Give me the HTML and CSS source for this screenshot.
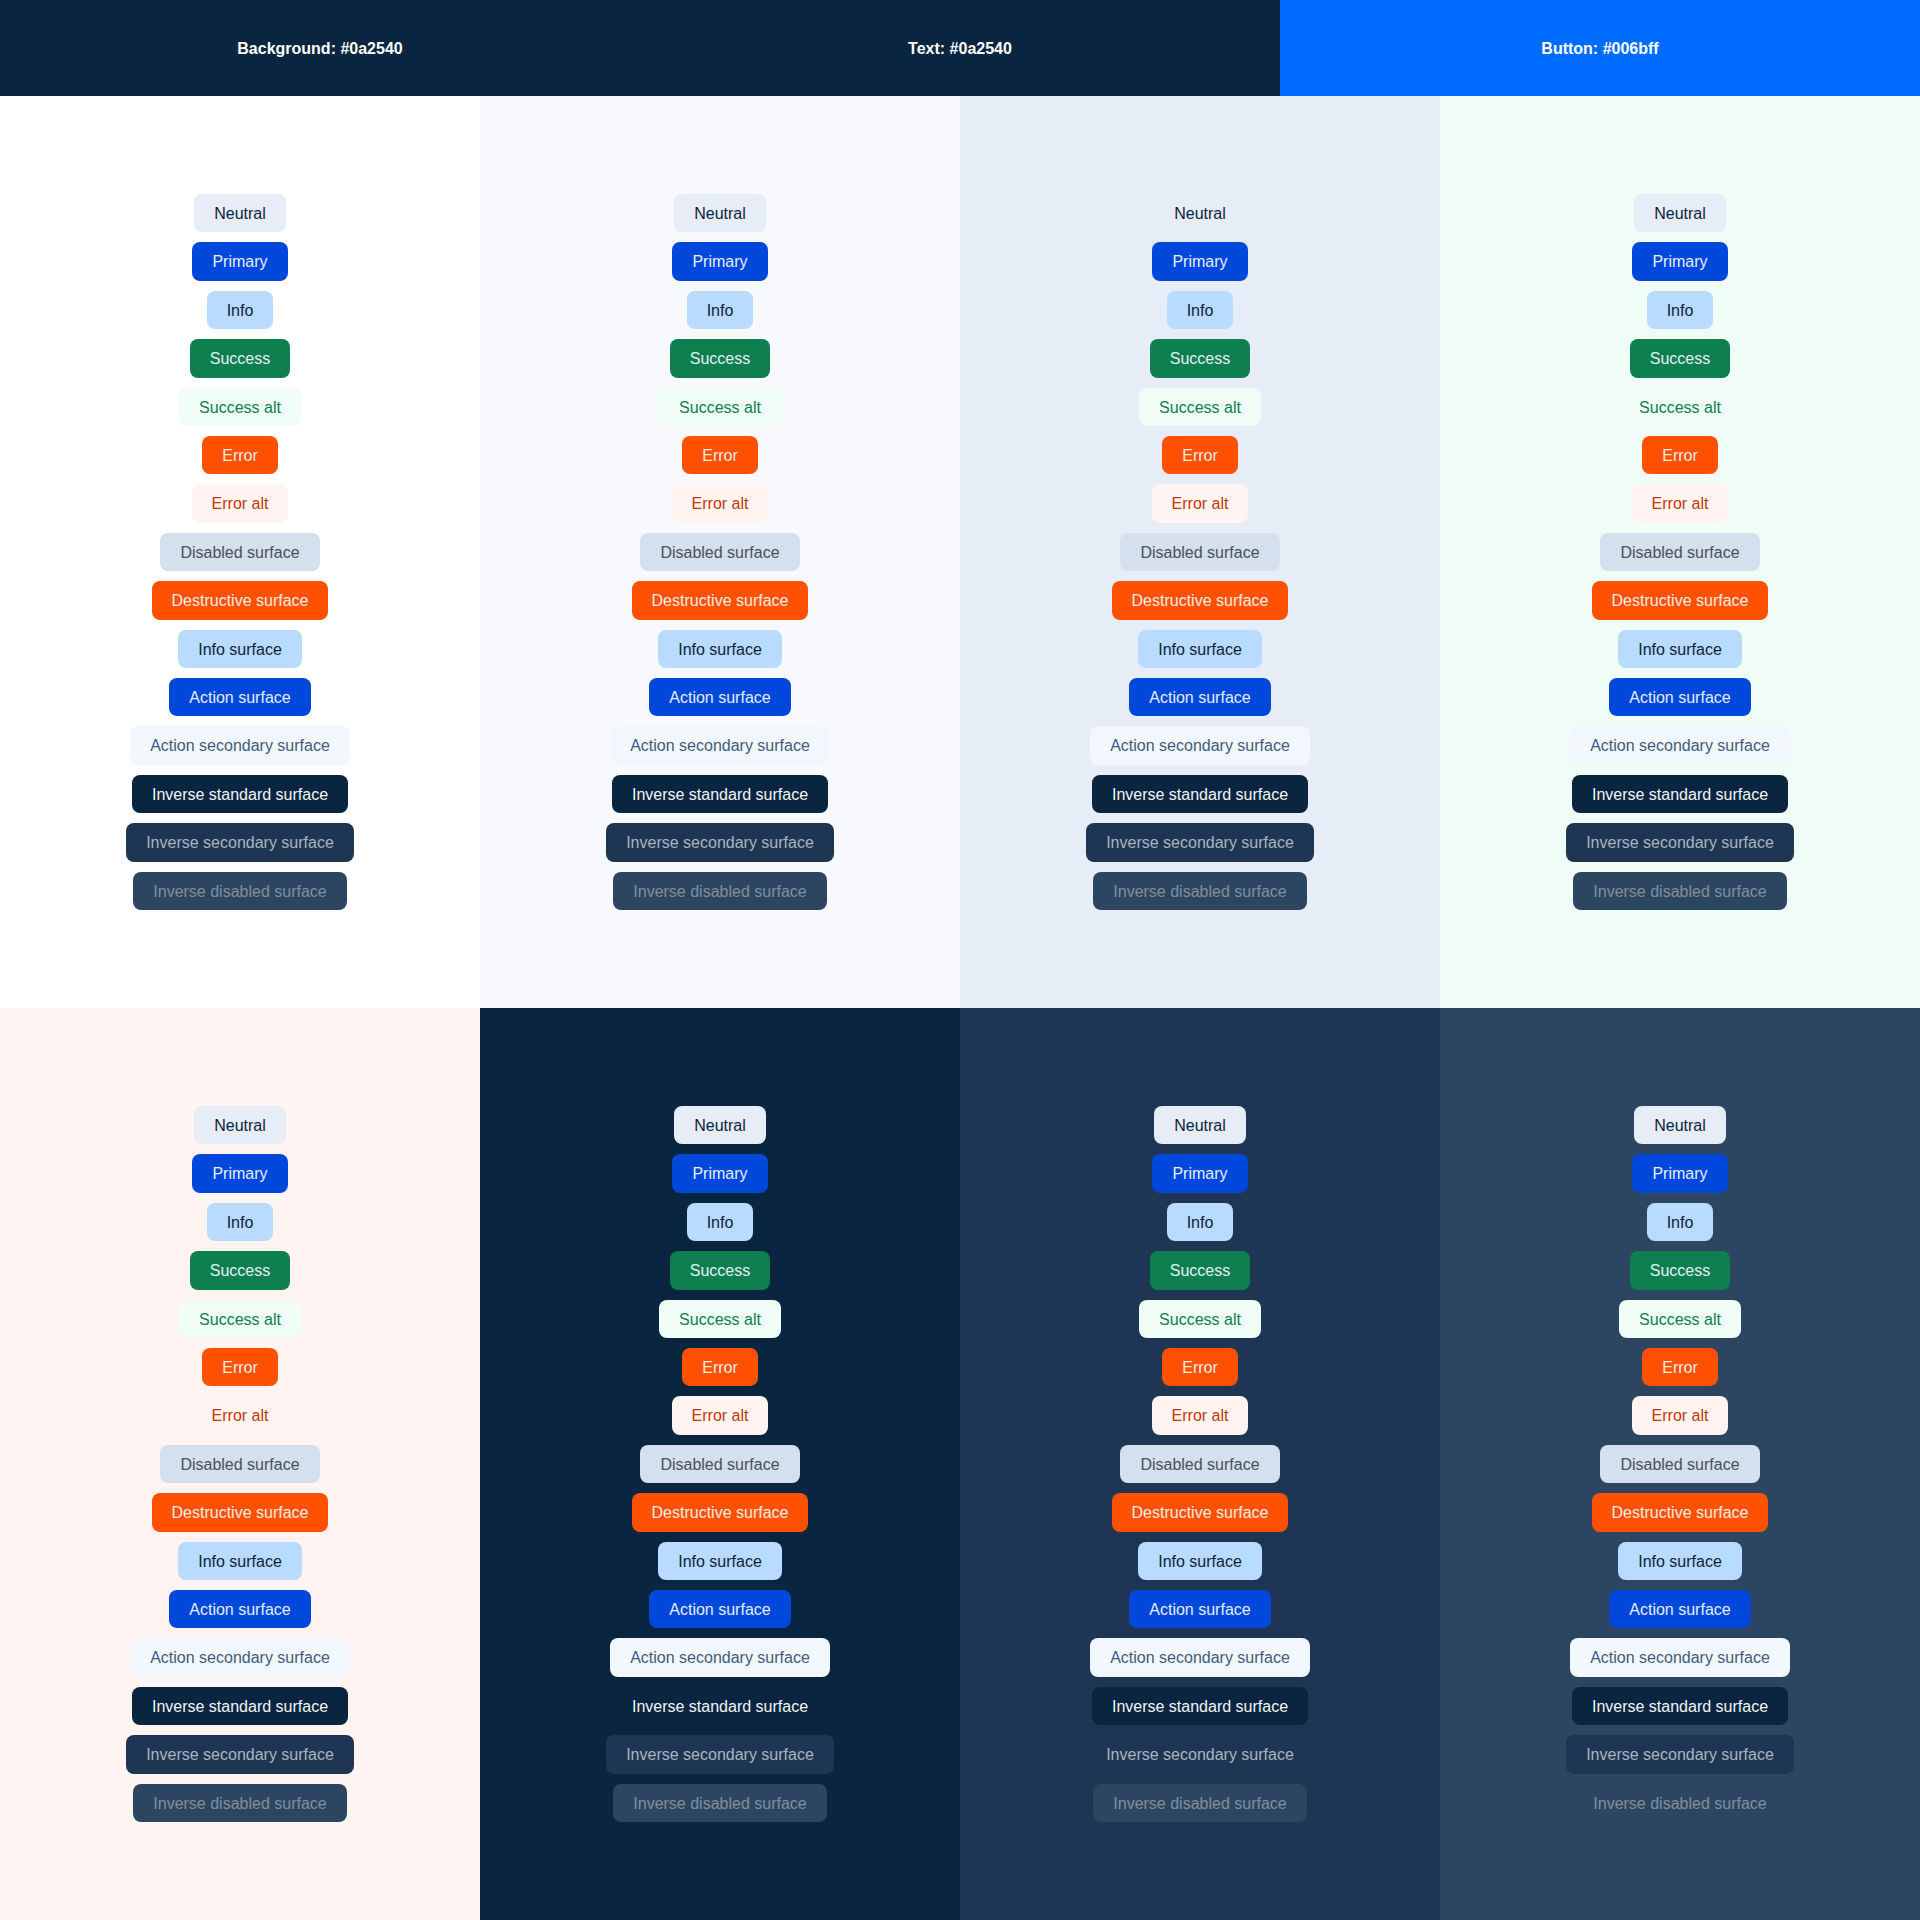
FILE: index.html
```html
<!DOCTYPE html>
<html lang="en">
<head>
<meta charset="utf-8">
<title>Surface palette</title>
<link rel="stylesheet" href="styles.css">
</head>
<body>
<header class="swatches">
  <div class="swatch swatch-bg">Background: #0a2540</div>
  <div class="swatch swatch-text">Text: #0a2540</div>
  <div class="swatch swatch-button">Button: #006bff</div>
</header>
<main class="grid">
  <section class="cell cell-white">
    <span class="badge neutral">Neutral</span>
    <span class="badge primary">Primary</span>
    <span class="badge info">Info</span>
    <span class="badge success">Success</span>
    <span class="badge success-alt">Success alt</span>
    <span class="badge error">Error</span>
    <span class="badge error-alt">Error alt</span>
    <span class="badge disabled">Disabled surface</span>
    <span class="badge destructive">Destructive surface</span>
    <span class="badge info-surface">Info surface</span>
    <span class="badge action">Action surface</span>
    <span class="badge action-secondary">Action secondary surface</span>
    <span class="badge inverse-standard">Inverse standard surface</span>
    <span class="badge inverse-secondary">Inverse secondary surface</span>
    <span class="badge inverse-disabled">Inverse disabled surface</span>
  </section>
  <section class="cell cell-gray">
    <span class="badge neutral">Neutral</span>
    <span class="badge primary">Primary</span>
    <span class="badge info">Info</span>
    <span class="badge success">Success</span>
    <span class="badge success-alt">Success alt</span>
    <span class="badge error">Error</span>
    <span class="badge error-alt">Error alt</span>
    <span class="badge disabled">Disabled surface</span>
    <span class="badge destructive">Destructive surface</span>
    <span class="badge info-surface">Info surface</span>
    <span class="badge action">Action surface</span>
    <span class="badge action-secondary">Action secondary surface</span>
    <span class="badge inverse-standard">Inverse standard surface</span>
    <span class="badge inverse-secondary">Inverse secondary surface</span>
    <span class="badge inverse-disabled">Inverse disabled surface</span>
  </section>
  <section class="cell cell-neutral">
    <span class="badge neutral">Neutral</span>
    <span class="badge primary">Primary</span>
    <span class="badge info">Info</span>
    <span class="badge success">Success</span>
    <span class="badge success-alt">Success alt</span>
    <span class="badge error">Error</span>
    <span class="badge error-alt">Error alt</span>
    <span class="badge disabled">Disabled surface</span>
    <span class="badge destructive">Destructive surface</span>
    <span class="badge info-surface">Info surface</span>
    <span class="badge action">Action surface</span>
    <span class="badge action-secondary">Action secondary surface</span>
    <span class="badge inverse-standard">Inverse standard surface</span>
    <span class="badge inverse-secondary">Inverse secondary surface</span>
    <span class="badge inverse-disabled">Inverse disabled surface</span>
  </section>
  <section class="cell cell-mint">
    <span class="badge neutral">Neutral</span>
    <span class="badge primary">Primary</span>
    <span class="badge info">Info</span>
    <span class="badge success">Success</span>
    <span class="badge success-alt">Success alt</span>
    <span class="badge error">Error</span>
    <span class="badge error-alt">Error alt</span>
    <span class="badge disabled">Disabled surface</span>
    <span class="badge destructive">Destructive surface</span>
    <span class="badge info-surface">Info surface</span>
    <span class="badge action">Action surface</span>
    <span class="badge action-secondary">Action secondary surface</span>
    <span class="badge inverse-standard">Inverse standard surface</span>
    <span class="badge inverse-secondary">Inverse secondary surface</span>
    <span class="badge inverse-disabled">Inverse disabled surface</span>
  </section>
  <section class="cell cell-rose">
    <span class="badge neutral">Neutral</span>
    <span class="badge primary">Primary</span>
    <span class="badge info">Info</span>
    <span class="badge success">Success</span>
    <span class="badge success-alt">Success alt</span>
    <span class="badge error">Error</span>
    <span class="badge error-alt">Error alt</span>
    <span class="badge disabled">Disabled surface</span>
    <span class="badge destructive">Destructive surface</span>
    <span class="badge info-surface">Info surface</span>
    <span class="badge action">Action surface</span>
    <span class="badge action-secondary">Action secondary surface</span>
    <span class="badge inverse-standard">Inverse standard surface</span>
    <span class="badge inverse-secondary">Inverse secondary surface</span>
    <span class="badge inverse-disabled">Inverse disabled surface</span>
  </section>
  <section class="cell cell-navy">
    <span class="badge neutral">Neutral</span>
    <span class="badge primary">Primary</span>
    <span class="badge info">Info</span>
    <span class="badge success">Success</span>
    <span class="badge success-alt">Success alt</span>
    <span class="badge error">Error</span>
    <span class="badge error-alt">Error alt</span>
    <span class="badge disabled">Disabled surface</span>
    <span class="badge destructive">Destructive surface</span>
    <span class="badge info-surface">Info surface</span>
    <span class="badge action">Action surface</span>
    <span class="badge action-secondary">Action secondary surface</span>
    <span class="badge inverse-standard">Inverse standard surface</span>
    <span class="badge inverse-secondary">Inverse secondary surface</span>
    <span class="badge inverse-disabled">Inverse disabled surface</span>
  </section>
  <section class="cell cell-slate">
    <span class="badge neutral">Neutral</span>
    <span class="badge primary">Primary</span>
    <span class="badge info">Info</span>
    <span class="badge success">Success</span>
    <span class="badge success-alt">Success alt</span>
    <span class="badge error">Error</span>
    <span class="badge error-alt">Error alt</span>
    <span class="badge disabled">Disabled surface</span>
    <span class="badge destructive">Destructive surface</span>
    <span class="badge info-surface">Info surface</span>
    <span class="badge action">Action surface</span>
    <span class="badge action-secondary">Action secondary surface</span>
    <span class="badge inverse-standard">Inverse standard surface</span>
    <span class="badge inverse-secondary">Inverse secondary surface</span>
    <span class="badge inverse-disabled">Inverse disabled surface</span>
  </section>
  <section class="cell cell-steel">
    <span class="badge neutral">Neutral</span>
    <span class="badge primary">Primary</span>
    <span class="badge info">Info</span>
    <span class="badge success">Success</span>
    <span class="badge success-alt">Success alt</span>
    <span class="badge error">Error</span>
    <span class="badge error-alt">Error alt</span>
    <span class="badge disabled">Disabled surface</span>
    <span class="badge destructive">Destructive surface</span>
    <span class="badge info-surface">Info surface</span>
    <span class="badge action">Action surface</span>
    <span class="badge action-secondary">Action secondary surface</span>
    <span class="badge inverse-standard">Inverse standard surface</span>
    <span class="badge inverse-secondary">Inverse secondary surface</span>
    <span class="badge inverse-disabled">Inverse disabled surface</span>
  </section>
</main>
</body>
</html>
```
FILE: styles.css
```css
* { box-sizing: border-box; }

html, body {
  margin: 0;
  padding: 0;
}

body {
  width: 1920px;
  font-family: "Liberation Sans", Arial, Helvetica, sans-serif;
  background: #ffffff;
}

.swatches {
  display: grid;
  grid-template-columns: repeat(3, 1fr);
  height: 96px;
}

.swatch {
  display: flex;
  align-items: center;
  justify-content: center;
  padding-top: 2px;
  color: #ffffff;
  font-weight: 700;
  font-size: 16px;
  line-height: 1.4;
}

.swatch-bg, .swatch-text { background: #0a2540; }
.swatch-button { background: #006bff; }

.grid {
  display: grid;
  grid-template-columns: repeat(4, 1fr);
  grid-template-rows: repeat(2, 912px);
}

.cell {
  display: flex;
  flex-direction: column;
  align-items: center;
  justify-content: center;
  gap: 10px;
}

.cell-white { background: #ffffff; }
.cell-gray { background: #f7f9fc; }
.cell-neutral { background: #e6edf7; }
.cell-mint { background: #f0fdf6; }
.cell-rose { background: #fff4f2; }
.cell-navy { background: #0a2540; }
.cell-slate { background: #1e3653; }
.cell-steel { background: #2c4661; }

.badge {
  display: block;
  padding: 9px 20px 7px;
  border-radius: 8px;
  font-size: 16px;
  line-height: 1.4;
  white-space: nowrap;
}

.neutral { background: #e6edf7; color: #0a2540; }
.primary { background: #0048db; color: #e6edf7; }
.info { background: #b8dbff; color: #0a2540; }
.success { background: #0e7f4f; color: #e6edf7; }
.success-alt { background: #f0fdf6; color: #0e7f4f; }
.error { background: #ff5100; color: #f2ece8; }
.error-alt { background: #fff4f2; color: #bf3a0b; }
.disabled { background: #d4e0ee; color: #4a4f57; }
.destructive { background: #ff5100; color: #f2ece8; }
.info-surface { background: #b8dbff; color: #0a2540; }
.action { background: #0048db; color: #e6edf7; }
.action-secondary { background: #f2f7fe; color: #425b7a; }
.inverse-standard { background: #0a2540; color: #f2f5f9; }
.inverse-secondary { background: #1e3653; color: #aab4c0; }
.inverse-disabled { background: #2c4661; color: #818e9d; }
```
